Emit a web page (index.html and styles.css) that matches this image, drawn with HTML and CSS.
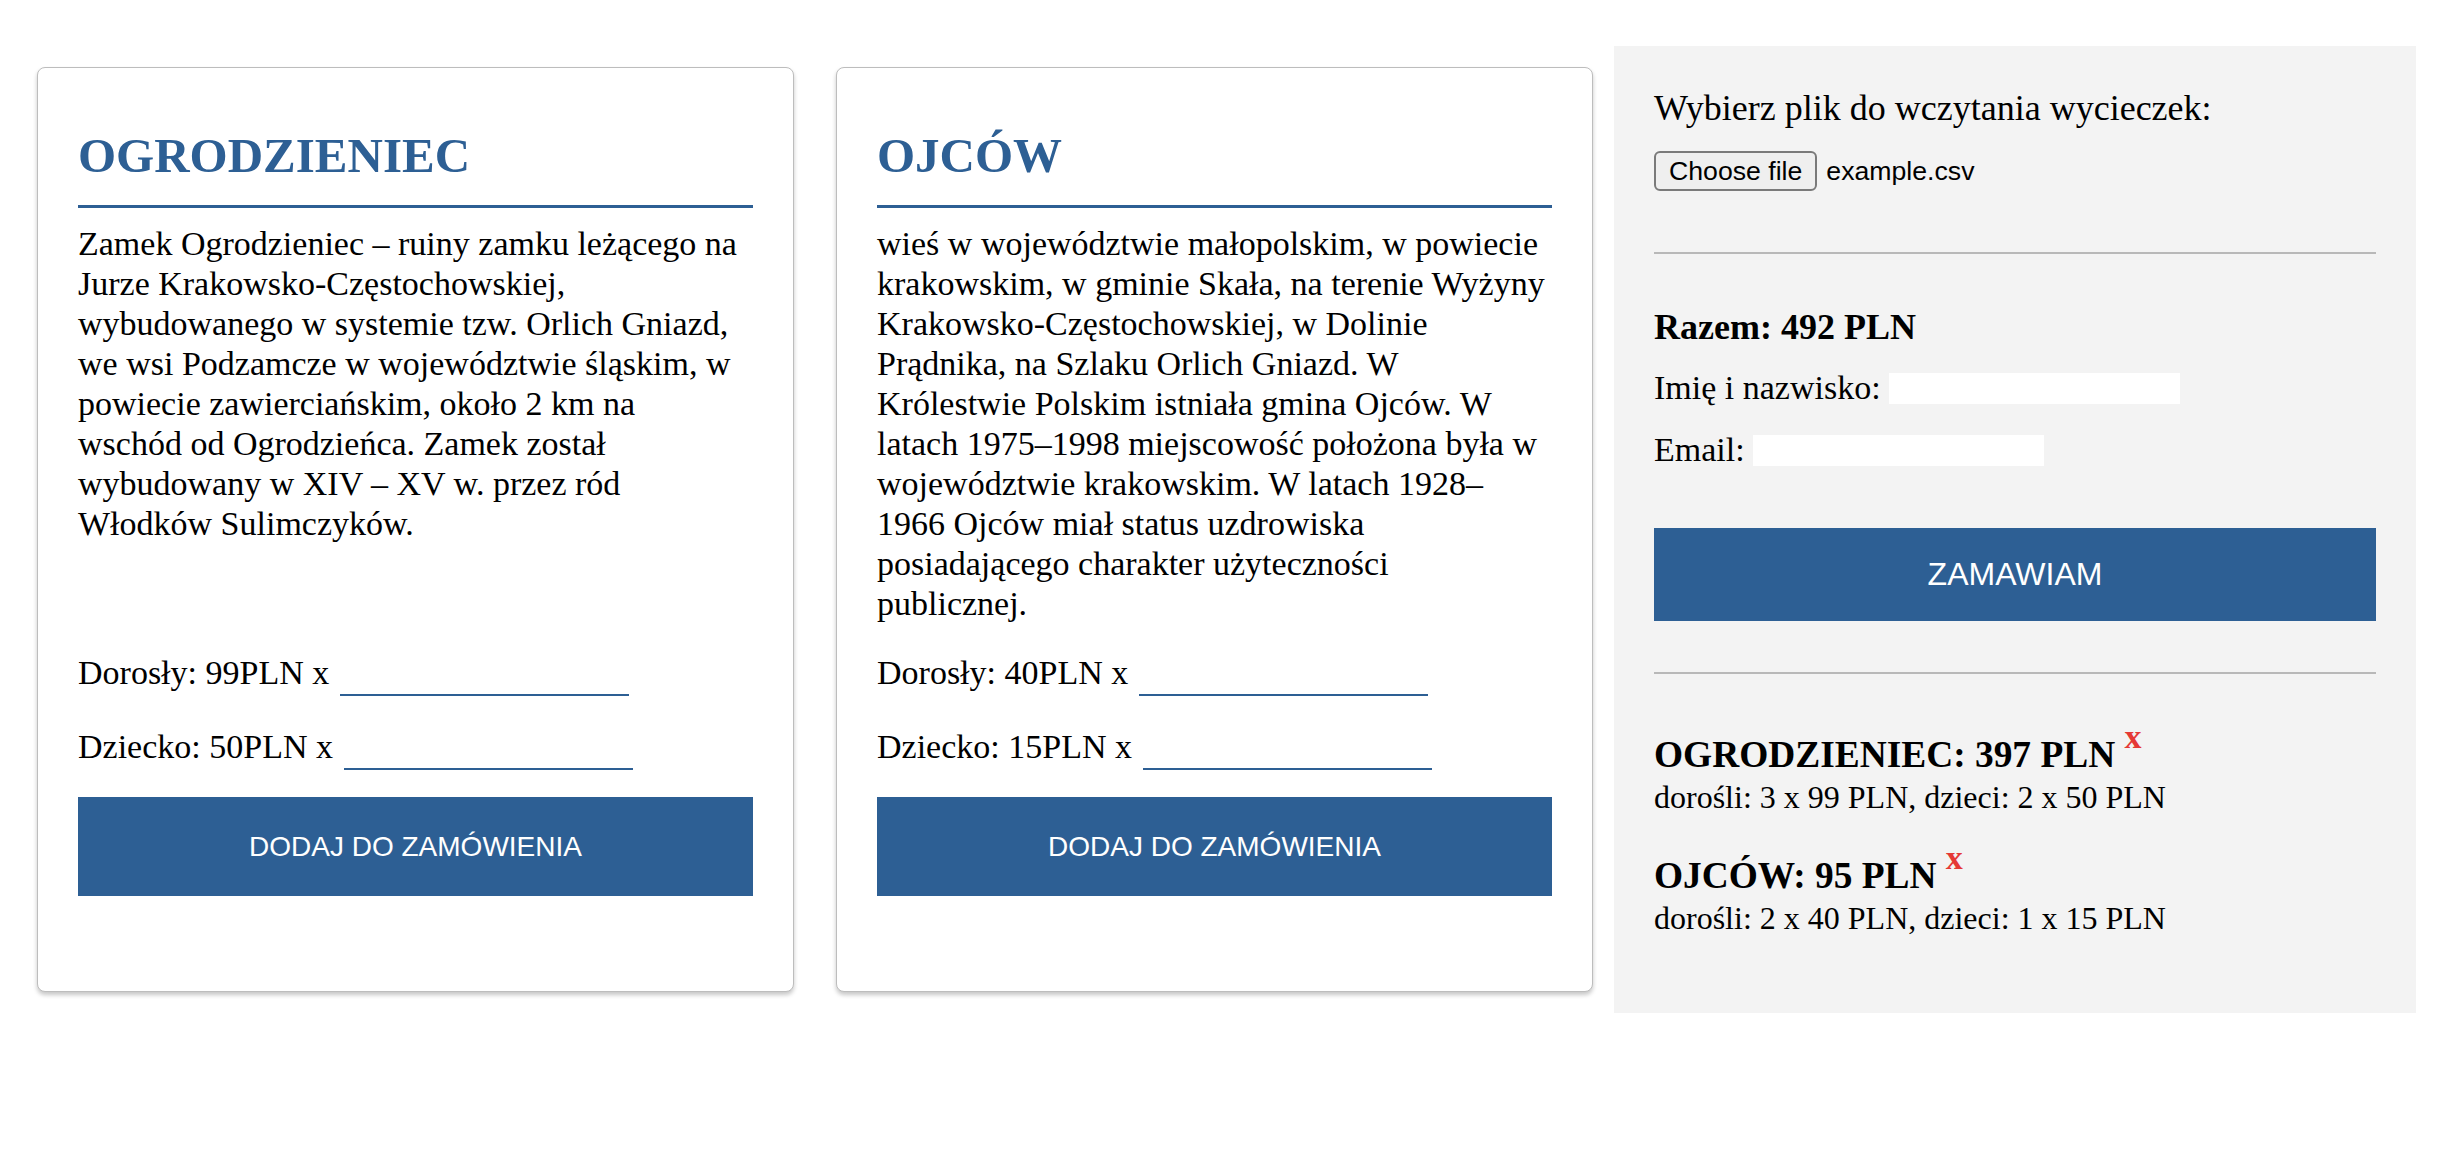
FILE: index.html
```html
<!DOCTYPE html>
<html lang="pl">
<head>
<meta charset="utf-8">
<title>Wycieczki</title>
<link rel="stylesheet" href="styles.css">
</head>
<body>
<div class="page">
  <article class="card">
    <h2 class="card-title">OGRODZIENIEC</h2>
    <p class="card-desc">Zamek Ogrodzieniec – ruiny zamku leżącego na Jurze Krakowsko-Częstochowskiej, wybudowanego w systemie tzw. Orlich Gniazd, we wsi Podzamcze w województwie śląskim, w powiecie zawierciańskim, około 2 km na wschód&nbsp;od Ogrodzieńca. Zamek został wybudowany w XIV – XV w. przez ród Włodków Sulimczyków.</p>
    <form class="card-form">
      <label class="qty-row"><span>Dorosły: 99PLN x</span><input class="qty" type="text"></label>
      <label class="qty-row"><span>Dziecko: 50PLN x</span><input class="qty" type="text"></label>
      <button class="btn" type="button">DODAJ DO ZAMÓWIENIA</button>
    </form>
  </article>

  <article class="card">
    <h2 class="card-title">OJCÓW</h2>
    <p class="card-desc">wieś w województwie małopolskim, w powiecie krakowskim, w gminie Skała, na terenie Wyżyny Krakowsko-Częstochowskiej, w Dolinie Prądnika, na Szlaku Orlich Gniazd. W Królestwie Polskim istniała gmina Ojców. W latach 1975–1998 miejscowość położona była w województwie krakowskim. W latach 1928–1966&nbsp;Ojców miał status uzdrowiska posiadającego charakter użyteczności<br>publicznej.</p>
    <form class="card-form">
      <label class="qty-row"><span>Dorosły: 40PLN x</span><input class="qty" type="text"></label>
      <label class="qty-row"><span>Dziecko: 15PLN x</span><input class="qty" type="text"></label>
      <button class="btn" type="button">DODAJ DO ZAMÓWIENIA</button>
    </form>
  </article>

  <aside class="panel">
    <span class="file-label">Wybierz plik do wczytania wycieczek:</span>
    <div class="file-row">
      <button class="file-btn" type="button">Choose file</button>
      <span class="file-name">example.csv</span>
    </div>
    <hr class="sep sep-top">
    <div class="total">Razem: 492 PLN</div>
    <label class="field field-name"><span>Imię i nazwisko:</span><input class="field-input" type="text"></label>
    <label class="field field-email"><span>Email:</span><input class="field-input" type="email"></label>
    <button class="order-btn" type="button">ZAMAWIAM</button>
    <hr class="sep sep-bottom">
    <div class="order">
      <h3 class="order-title">OGRODZIENIEC: 397 PLN <span class="remove">x</span></h3>
      <div class="order-desc">dorośli: 3 x 99 PLN, dzieci: 2 x 50 PLN</div>
    </div>
    <div class="order order-next">
      <h3 class="order-title">OJCÓW: 95 PLN <span class="remove">x</span></h3>
      <div class="order-desc">dorośli: 2 x 40 PLN, dzieci: 1 x 15 PLN</div>
    </div>
  </aside>
</div>
</body>
</html>
```

FILE: styles.css
```css
* {
  box-sizing: border-box;
}

html, body {
  margin: 0;
  background: #ffffff;
}

body {
  font-family: "Liberation Serif", "Times New Roman", serif;
  color: #000000;
}

.page {
  display: flex;
  align-items: stretch;
  padding: 46px 48px 0 16px;
}

/* ---------- cards ---------- */

.card {
  flex: 1 1 0;
  min-width: 0;
  margin: 21px;
  padding: 40px 40px 95px;
  background: #ffffff;
  border: 1px solid #bdbdbd;
  border-radius: 8px;
  box-shadow: 0 3px 4px rgba(0, 0, 0, 0.22);
  display: flex;
  flex-direction: column;
}

.card-title {
  margin: 24px 0 0;
  padding-bottom: 25px;
  border-bottom: 3px solid #2d5f94;
  font-size: 49px;
  line-height: 48px;
  font-weight: 700;
  color: #2d5f94;
}

.card-desc {
  margin: 16px 0 0;
  font-size: 34px;
  line-height: 40px;
}

.card-form {
  margin-top: auto;
  padding-top: 20px;
  display: flex;
  flex-direction: column;
}

.qty-row {
  display: flex;
  align-items: flex-start;
  font-size: 34px;
  line-height: 40px;
}

.qty-row + .qty-row {
  margin-top: 31px;
}

.qty {
  width: 289px;
  height: 43px;
  margin-left: 11px;
  padding: 0;
  border: 0;
  border-bottom: 2px solid #2d5f94;
  background: transparent;
  font-family: inherit;
  font-size: 34px;
  outline: none;
}

.btn {
  display: block;
  width: 100%;
  height: 99px;
  margin-top: 27px;
  border: 0;
  background: #2d5f94;
  color: #ffffff;
  font-family: "Liberation Sans", Arial, sans-serif;
  font-size: 28px;
  cursor: pointer;
}

/* ---------- side panel ---------- */

.panel {
  flex: 0 0 802px;
  min-height: 967px;
  padding: 40px;
  background: #f3f3f3;
  display: flex;
  flex-direction: column;
  align-items: stretch;
}

.file-label {
  display: block;
  margin-top: 2px;
  font-size: 36px;
  line-height: 40px;
}

.file-row {
  display: flex;
  align-items: center;
  height: 40px;
  margin-top: 23px;
  font-family: "Liberation Sans", Arial, sans-serif;
  font-size: 26.67px;
}

.file-btn {
  height: 40px;
  padding: 0 13px;
  border: 2px solid #7a7a7a;
  border-radius: 6px;
  background: #efefef;
  color: #000000;
  font-family: "Liberation Sans", Arial, sans-serif;
  font-size: 26.67px;
}

.file-name {
  margin-left: 9px;
}

.sep {
  width: 100%;
  height: 0;
  margin: 0;
  border: 0;
  border-top: 2px solid #b8b8b8;
}

.sep-top {
  margin-top: 61px;
}

.sep-bottom {
  margin-top: 51px;
}

.total {
  margin-top: 53px;
  font-size: 36px;
  line-height: 40px;
  font-weight: 700;
}

.field {
  display: flex;
  align-items: center;
  font-size: 34px;
  line-height: 40px;
}

.field-name {
  margin-top: 21px;
}

.field-email {
  margin-top: 22px;
}

.field-input {
  width: 291px;
  height: 31px;
  margin-left: 8px;
  border: 0;
  padding: 0 4px;
  background: #ffffff;
  font-family: inherit;
  font-size: 26px;
  outline: none;
}

.order-btn {
  display: block;
  width: 100%;
  height: 93px;
  margin-top: 58px;
  border: 0;
  background: #2d5f94;
  color: #ffffff;
  font-family: "Liberation Sans", Arial, sans-serif;
  font-size: 32px;
  cursor: pointer;
}

.order {
  margin-top: 60px;
}

.order-next {
  margin-top: 38px;
}

.order-title {
  margin: 0;
  font-size: 37.4px;
  line-height: 42px;
  font-weight: 700;
}

.remove {
  color: #e53935;
  font-size: 34px;
  line-height: 0;
  vertical-align: 19px;
  cursor: pointer;
}

.order-desc {
  margin-top: 1px;
  font-size: 32px;
  line-height: 40px;
}
```
